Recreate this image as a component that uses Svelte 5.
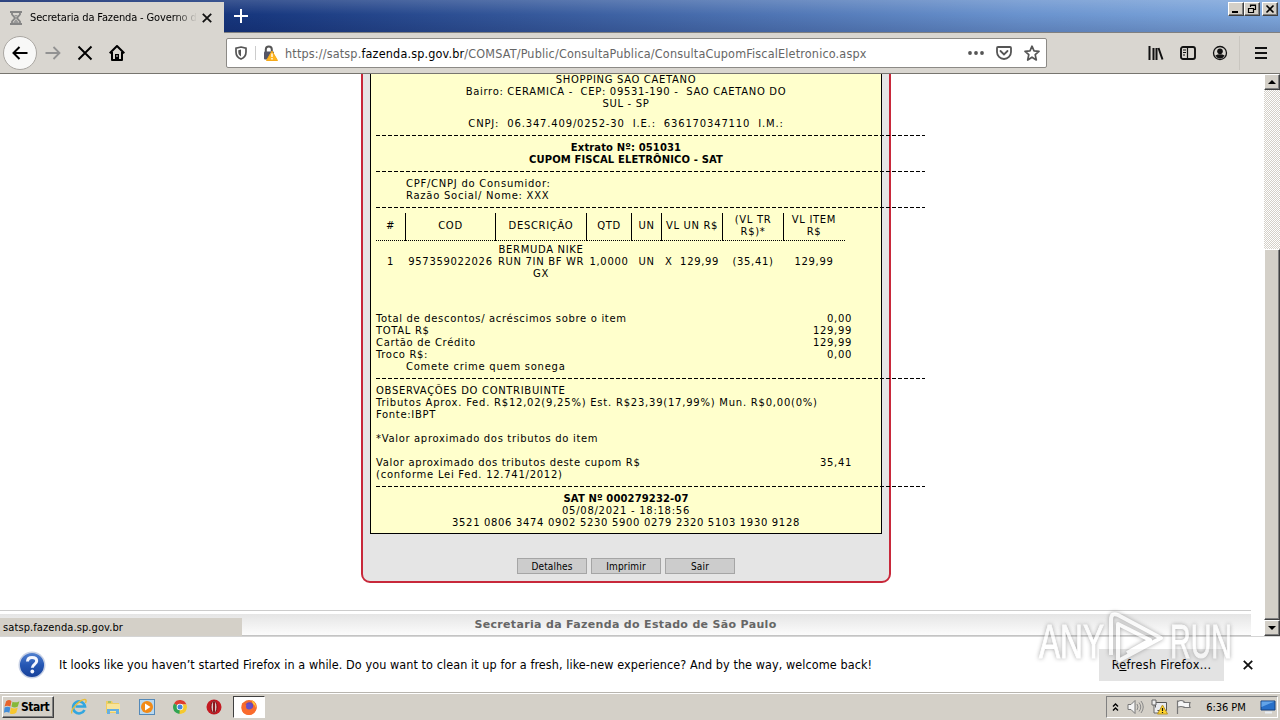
<script lang="ts">
	type Amount = {
		label: string;
		value: string;
	};

	const headers = ['#', 'COD', 'DESCRIÇÃO', 'QTD', 'UN', 'VL UN R$', '(VL TR\nR$)*', 'VL ITEM\nR$'];
	const item = [
		'1',
		'957359022026',
		'BERMUDA NIKE\nRUN 7IN BF WR\nGX',
		'1,0000',
		'UN',
		'X\u00a0 129,99',
		'(35,41)',
		'129,99'
	];

	const totals: Amount[] = [
		{ label: 'Total de descontos/ acréscimos sobre o item', value: '0,00' },
		{ label: 'TOTAL R$', value: '129,99' },
		{ label: 'Cartão de Crédito', value: '129,99' },
		{ label: 'Troco R$:', value: '0,00' }
	];

	const actions = ['Detalhes', 'Imprimir', 'Sair'];
</script>

<div class="screen">
	<header class="titlebar">
		<div class="tab">
			<svg class="hourglass" width="12" height="14" viewBox="0 0 12 14">
				<path d="M0 1h12M0 13h12M2 1v2.500L5 7 2 10.500V13M10 1v2.500L7 7l3 3.500V13" fill="none" stroke="#858585" stroke-width="1.800" />
				<path d="M3 12l3-4 3 4zM4 4h4L6 6z" fill="#999" />
			</svg>
			<span class="tab-title">Secretaria da Fazenda - Governo d</span>
			<svg width="10" height="10" viewBox="0 0 10 10"><path d="M.8.8l8.400 8.400M9.200.8L.8 9.200" stroke="#111" stroke-width="1.800" /></svg>
		</div>
		<svg class="new-tab" width="14" height="14" viewBox="0 0 14 14"><path d="M7 0v14M0 7h14" stroke="#fff" stroke-width="2" /></svg>
		<div class="window-buttons">
			<span class="win-btn"><svg width="12" height="10" viewBox="0 0 12 10"><path d="M2 8h6" stroke="#000" stroke-width="2" /></svg></span>
			<span class="win-btn"><svg width="12" height="10" viewBox="0 0 12 10"><path d="M4.500 3V1h5v4.500H8M4 1.500h6M2 4.500h5.500v4H2.500V4M2 4.500h6" fill="none" stroke="#000" stroke-width="1.200" /></svg></span>
			<span class="win-btn close"><svg width="12" height="10" viewBox="0 0 12 10"><path d="M2.500 1.500l7 7M9.500 1.500l-7 7" stroke="#000" stroke-width="1.600" /></svg></span>
		</div>
	</header>

	<nav class="toolbar">
		<div class="nav-buttons">
			<span class="back"><svg width="16" height="14" viewBox="0 0 16 14"><path d="M15.500 7H1.500M7.500 1l-6 6 6 6" fill="none" stroke="#000" stroke-width="2" /></svg></span>
			<svg width="16" height="14" viewBox="0 0 16 14"><path d="M.5 7h14M8.500 1l6 6-6 6" fill="none" stroke="#929292" stroke-width="1.800" /></svg>
			<svg width="16" height="16" viewBox="0 0 16 16"><path d="M1.500 1.500l13 13M14.500 1.500l-13 13" stroke="#000" stroke-width="1.900" /></svg>
			<svg width="16" height="16" viewBox="0 0 16 16">
				<path d="M.7 8.200L8 1l7.300 7.200M3 7v8h10V7" fill="none" stroke="#000" stroke-width="2" stroke-linejoin="round" />
				<path d="M6 15V9h4v6" fill="#000" /><path d="M8 10v2" stroke="#ddd" />
			</svg>
		</div>

		<div class="urlbar">
			<svg class="shield" width="12" height="14" viewBox="0 0 12 14">
				<path d="M6 1l5 1.200V6c0 3.500-2 5.800-5 7C3 11.800 1 9.500 1 6V2.200z" fill="none" stroke="#555" stroke-width="1.700" />
				<path d="M6 3.500v7C4 9.300 3.300 7.700 3.300 6V4.200z" fill="#555" />
			</svg>
			<svg class="lock" width="15" height="16" viewBox="0 0 15 16">
				<path d="M2.800 7V4.500a3 3 0 0 1 6 0V7" fill="none" stroke="#555" stroke-width="2" />
				<rect x="1" y="6.500" width="10" height="8" rx="1" fill="#555566" />
				<path d="M9 6l5.500 9.500H3.500z" fill="#ffb51f" stroke="#f4a91b" />
				<path d="M9 8.500v3.500M9 13v1.500" stroke="#fff" stroke-width="1.400" />
			</svg>
			<span class="url">https://satsp.<b>fazenda.sp.gov.br</b>/COMSAT/Public/ConsultaPublica/ConsultaCupomFiscalEletronico.aspx</span>
			<svg class="dots" width="16" height="4" viewBox="0 0 16 4"><circle cx="2" cy="2" r="1.900" /><circle cx="8" cy="2" r="1.900" /><circle cx="14" cy="2" r="1.900" /></svg>
			<svg class="pocket" width="16" height="14" viewBox="0 0 16 14">
				<path d="M2 1h12q1 0 1 1v4a7 7 0 0 1-14 0V2q0-1 1-1z" fill="none" stroke="#555" stroke-width="1.800" />
				<path d="M4.500 5L8 8.500 11.500 5" fill="none" stroke="#555" stroke-width="1.800" stroke-linecap="round" />
			</svg>
			<svg width="16" height="16" viewBox="0 0 16 16"><path d="M8 1.200l2 4.600 5 .5-3.800 3.400L12.300 15 8 12.200 3.700 15l1.100-5.300L1 6.300l5-.5z" fill="none" stroke="#555" stroke-width="1.700" stroke-linejoin="round" /></svg>
		</div>

		<div class="tools">
			<svg width="16" height="16" viewBox="0 0 16 16"><path d="M1.500 1v14M5.500 3v12M8.500 3v12M10.500 3l4 11.500" stroke="#111" stroke-width="2" /></svg>
			<svg width="16" height="14" viewBox="0 0 16 14"><rect x="1" y="1" width="14" height="12" rx="2" fill="none" stroke="#111" stroke-width="1.900" /><path d="M7.500 1v12M3 4h3M3 6.500h3M3 9h2" stroke="#111" stroke-width="1.200" /></svg>
			<svg width="16" height="16" viewBox="0 0 16 16"><circle cx="8" cy="8" r="6.500" fill="none" stroke="#111" stroke-width="1.300" /><circle cx="8" cy="6.200" r="2.800" fill="#111" /><path d="M3.300 10.500q4.700-2.500 9.400 0Q11 13.500 8 13.500t-4.700-3z" fill="#111" /></svg>
			<span class="divider"></span>
			<svg width="12" height="12" viewBox="0 0 12 12"><path d="M0 1h12M0 6h12M0 11h12" stroke="#111" stroke-width="2" /></svg>
		</div>
	</nav>

	<div class="viewport">
		<main class="page">
			<div class="panel">
				<div class="receipt">
					<div class="address">SHOPPING SAO CAETANO<br />Bairro: CERAMICA -&nbsp; CEP: 09531-190 -&nbsp; SAO CAETANO DO<br />SUL - SP</div>
					<div class="tax-ids">CNPJ:&nbsp; 06.347.409/0252-30&nbsp; I.E.:&nbsp; 636170347110&nbsp; I.M.:</div>
					<div class="rule"></div>
					<div class="heading">Extrato Nº: 051031<br />CUPOM FISCAL ELETRÔNICO - SAT</div>
					<div class="rule"></div>
					<div class="indent">CPF/CNPJ do Consumidor:<br />Razão Social/ Nome: XXX</div>
					<div class="rule"></div>

					<div class="items head">
						{#each headers as header}
							<div class="cell">{header}</div>
						{/each}
					</div>
					<div class="items">
						{#each item as value}
							<div class="cell">{value}</div>
						{/each}
					</div>

					<div class="totals">
						{#each totals as total}
							<div class="amount"><span>{total.label}</span><span>{total.value}</span></div>
						{/each}
						<div class="indent">Comete crime quem sonega</div>
					</div>
					<div class="rule"></div>
					<div>OBSERVAÇÕES DO CONTRIBUINTE</div>
					<div class="taxes">Tributos Aprox. Fed. R$12,02(9,25%) Est. R$23,39(17,99%) Mun. R$0,00(0%)</div>
					<div>Fonte:IBPT</div>
					<div class="note">*Valor aproximado dos tributos do item</div>
					<div class="amount"><span>Valor aproximado dos tributos deste cupom R$</span><span>35,41</span></div>
					<div class="law">(conforme Lei Fed. 12.741/2012)</div>
					<div class="rule"></div>
					<div class="sat"><b>SAT Nº 000279232-07</b><br /><span class="issued">05/08/2021 - 18:18:56</span><br />3521 0806 3474 0902 5230 5900 0279 2320 5103 1930 9128</div>
				</div>

				<div class="actions">
					{#each actions as action}
						<button>{action}</button>
					{/each}
				</div>
			</div>
			<footer>Secretaria da Fazenda do Estado de São Paulo</footer>
		</main>

		<div class="scrollbar">
			<span class="scroll-btn"><svg width="8" height="4" viewBox="0 0 8 4"><path d="M0 4l4-4 4 4z" /></svg></span>
			<span class="track"></span>
			<span class="thumb"></span>
			<span class="scroll-btn"><svg width="8" height="4" viewBox="0 0 8 4"><path d="M0 0l4 4 4-4z" /></svg></span>
		</div>
		<div class="status">satsp.fazenda.sp.gov.br</div>
	</div>

	<div class="notification">
		<svg class="help" width="28" height="28" viewBox="0 0 28 28">
			<defs><linearGradient id="help" x2="0" y2="1"><stop stop-color="#5584d2" /><stop offset=".5" stop-color="#2557b4" /><stop offset="1" stop-color="#174099" /></linearGradient></defs>
			<circle cx="14" cy="14" r="12.800" fill="url(#help)" stroke="#c8d1e5" stroke-width="1.500" />
			<path d="M9.500 10.500q.2-4 4.500-4 4.700 0 4.700 3.600c0 3.200-4.400 3.300-4.400 6.600" fill="none" stroke="#f5f7ff" stroke-width="3" />
			<circle cx="14.300" cy="20.500" r="1.900" fill="#f5f7ff" />
		</svg>
		<span class="message">It looks like you haven’t started Firefox in a while. Do you want to clean it up for a fresh, like-new experience? And by the way, welcome back!</span>
		<span class="refresh"><span>R<u>e</u>fresh Firefox...</span></span>
		<svg width="10" height="10" viewBox="0 0 10 10"><path d="M.8.8l8.400 8.400M9.200.8L.8 9.200" stroke="#111" stroke-width="1.800" /></svg>
	</div>

	<div class="taskbar">
		<div class="start">
			<svg width="17" height="16" viewBox="0 0 16 15">
				<path d="M2 2q3-2 5 0L6 7Q3 5.500.5 7z" fill="#e7642b" /><path d="M8 2.500q3 1.500 6.500-.5L13 7q-3 2-6 0z" fill="#86b83a" />
				<path d="M.5 8q3-1.500 5.500 0l-1 5q-2.500-1.500-5 0z" fill="#438dd8" /><path d="M6.500 8q3 2 6.500 0l-1.500 5q-3 2-6 .5z" fill="#f7c72f" />
			</svg>
			<span>Start</span>
		</div>
		<div class="apps">
			<svg width="18" height="18" viewBox="0 0 18 18">
				<path d="M14.500 12A6 6 0 1 1 15 8.500H5.500" fill="none" stroke="#32a6df" stroke-width="2.600" />
				<path d="M2 15.500C-1 13 10 1 15 1.500q2 .3.500 3.500" fill="none" stroke="#e8bd38" stroke-width="1.400" />
			</svg>
			<svg width="18" height="18" viewBox="0 0 18 18">
				<path d="M2 3h6l1 2h6v10H2z" fill="#efcd62" /><path d="M3 6h13v8H3z" fill="#f8e49a" /><path d="M3 16v-5h12v5h-3v-3H6v3z" fill="#67afe0" /><path d="M4 4h3" stroke="#5cb46a" />
			</svg>
			<svg width="18" height="18" viewBox="0 0 18 18"><rect x="1.500" y="1.500" width="15" height="15" fill="#b9d8ef" stroke="#5489b8" /><circle cx="9" cy="9" r="6" fill="#f28a16" /><path d="M7 5.500l5.500 3.500L7 12.500z" fill="#fff" /></svg>
			<svg width="18" height="18" viewBox="0 0 18 18">
				<circle cx="9" cy="9" r="7" fill="#e1e1dc" /><path d="M9 9L3 5.400A7 7 0 0 1 15.500 6.500H9z" fill="#df3d30" /><path d="M9 9L3 5.400A7 7 0 0 0 8.500 16l3-5z" fill="#31a352" /><path d="M9 6.500h6.500A7 7 0 0 1 8.500 16z" fill="#f5c92e" /><circle cx="9" cy="9" r="3.300" fill="#fff" /><circle cx="9" cy="9" r="2.500" fill="#4285dc" />
			</svg>
			<svg width="18" height="18" viewBox="0 0 18 18"><circle cx="9" cy="9" r="7.500" fill="#c41a22" /><ellipse cx="9" cy="9" rx="3" ry="6" fill="#e8deda" stroke="#701015" /><path d="M9 4v10" stroke="#8f151b" stroke-width="2.200" /></svg>
		</div>
		<div class="active-app">
			<svg width="18" height="18" viewBox="0 0 18 18">
				<circle cx="9" cy="9.500" r="7.500" fill="#f36a2d" /><circle cx="9.500" cy="8.500" r="4.300" fill="#6847b9" />
				<path d="M2 5q2 0 3 2 3-1 5 1-2 0-2.500 1.500Q9 12 12.500 10q2-3-1-8 6 2 5 9-2 6-8 6-7-1-7-7z" fill="#fa6b2d" /><path d="M11.500 2q5 3 4.500 8-1-3-3-4z" fill="#ffc83a" /><circle cx="9" cy="8.500" r="3" fill="#6550c8" />
			</svg>
		</div>
		<div class="tray">
			<svg width="8" height="10" viewBox="0 0 8 10"><path d="M1 4.500L3.500 2 6 4.500M1 8.500L3.500 6 6 8.500" fill="none" stroke="#000" stroke-width="1.400" /></svg>
			<svg width="17" height="16" viewBox="0 0 17 16"><path d="M1 5.500h3l4-4v13l-4-4H1z" fill="#f5f5f5" stroke="#777" /><path d="M10 5q2 3 0 6M12 3.500q3.500 4.500 0 9M14 2q4.500 6 0 12" fill="none" stroke="#888" /></svg>
			<svg width="17" height="16" viewBox="0 0 17 16"><path d="M4.500 3.500h11v8h-11z" fill="#e8eaee" stroke="#555" /><path d="M1 1h4v5H1zM3 6v8h5" fill="#eee" stroke="#666" /><path d="M11.500 6l5 9h-10z" fill="#ffd52c" stroke="#b99324" /><path d="M11.500 9v3M11.500 13v1" stroke="#111" stroke-width="1.200" /></svg>
			<svg width="17" height="16" viewBox="0 0 17 16"><path d="M2.500 15V1.500M3 2.500q3-2 6 0v1h6q-1 3 0 5H9V8q-3-1-6 0" fill="#f6f6f6" stroke="#777" stroke-width="1.200" /></svg>
			<span class="clock">6:36 PM</span>
			<svg width="16" height="14" viewBox="0 0 16 14"><path d="M1 1h14v9H1z" fill="#2870c9" stroke="#16407c" /><path d="M1.500 1.500h13L1.500 7z" fill="#63a4e8" /><path d="M5 12.500h7" stroke="#e8edf2" stroke-width="2" /></svg>
		</div>
	</div>

	<svg class="watermark" width="200" height="60" viewBox="0 0 200 60">
		<text x="3" y="50" textLength="65" lengthAdjust="spacingAndGlyphs">ANY</text>
		<path d="M75 47V12q0-8 7-5l43 23-43 23V16l32 16-23 13" />
		<text x="134" y="50" textLength="62" lengthAdjust="spacingAndGlyphs">RUN</text>
	</svg>
</div>

<style>
	:global(body) {
		margin: 0;
		overflow: hidden;
	}

	.screen {
		position: relative;
		display: flex;
		flex-direction: column;
		width: 1280px;
		height: 720px;
		overflow: hidden;
		background: #fff;
		color: #000;
		font-family: 'DejaVu Sans Condensed', 'DejaVu Sans', sans-serif;
		font-stretch: condensed;
	}

	svg {
		display: block;
		flex: none;
	}

	.titlebar {
		display: flex;
		align-items: flex-start;
		height: 32px;
		background:
			linear-gradient(rgba(255, 255, 255, 0.16), transparent 45%, rgba(0, 0, 40, 0.14)),
			linear-gradient(90deg, #0a246a, #18387f 20%, #6a93ce 80%, #7ea7dc);
		border-bottom: 1px solid #808080;
	}

	.tab {
		display: flex;
		align-items: center;
		width: 202px;
		height: 31px;
		margin-top: 2px;
		padding: 0 12px 0 10px;
		background: #d9d6d0;
	}

	.hourglass {
		margin-right: 8px;
	}

	.tab-title {
		width: 167px;
		margin-right: 5px;
		white-space: nowrap;
		font-size: 11px;
		letter-spacing: -0.13px;
		mask-image: linear-gradient(90deg, #000 145px, transparent 167px);
	}

	.new-tab {
		margin: 9px 0 0 10px;
	}

	.window-buttons {
		display: flex;
		margin: 2px 2px 0 auto;
	}

	.win-btn,
	.scroll-btn,
	.thumb {
		box-sizing: border-box;
		border: 1px solid;
		border-color: #fff #404040 #404040 #fff;
		background: #d4d0c8;
		box-shadow: inset -1px -1px #808080;
	}

	.win-btn {
		width: 16px;
		height: 14px;
		padding: 1px;
	}

	.win-btn.close {
		margin-left: 2px;
	}

	.toolbar {
		display: flex;
		align-items: center;
		box-sizing: border-box;
		height: 41px;
		border-bottom: 1px solid #77756f;
		background: #d9d6d0;
	}

	.nav-buttons {
		display: flex;
		align-items: center;
		gap: 16px;
		width: 223px;
		padding-left: 3px;
	}

	.back {
		display: flex;
		align-items: center;
		justify-content: center;
		width: 34px;
		height: 34px;
		margin-right: -8px;
		border: 1px solid #aaa7a2;
		border-radius: 50%;
		background: #f8f8f7;
		box-sizing: border-box;
	}

	.urlbar {
		display: flex;
		align-items: center;
		box-sizing: border-box;
		width: 821px;
		height: 30px;
		padding: 0 6px 0 8px;
		border: 1px solid #8c8a86;
		border-radius: 2px;
		background: #fff;
	}

	.shield {
		padding-right: 8px;
		border-right: 1px solid #ccc;
	}

	.lock {
		margin: 0 7px;
	}

	.url {
		width: 683px;
		color: #666;
		font-size: 12.5px;
		letter-spacing: 0.17px;
		white-space: nowrap;
	}

	.url b {
		color: #000;
		font-weight: 400;
	}

	.dots {
		fill: #555;
	}

	.pocket {
		margin: 0 12px;
	}

	.tools {
		display: flex;
		align-items: center;
		gap: 16px;
		margin-left: auto;
		padding-right: 13px;
	}

	.divider {
		width: 1px;
		height: 34px;
		margin: 0 -1px 0 -5px;
		background: #c9c6c0;
	}

	.viewport {
		position: relative;
		display: flex;
		height: 562px;
		overflow: hidden;
		font-family: 'DejaVu Sans', sans-serif;
		font-stretch: normal;
	}

	.page {
		display: flex;
		flex-direction: column;
		align-items: center;
		width: 1251px;
		margin-right: 13px;
	}

	.panel {
		box-sizing: border-box;
		width: 530px;
		height: 519px;
		margin: -10px 0 27px 1px;
		padding: 0 7px;
		border: 2px solid #c8283a;
		border-radius: 9px;
		background: #e5e5e5;
	}

	.receipt {
		box-sizing: border-box;
		width: 512px;
		height: 468px;
		padding: 7px 5px 0;
		border: 1px solid #000;
		background: #ffffcc;
		font-size: 10px;
		letter-spacing: 0.67px;
		line-height: 12px;
		white-space: nowrap;
	}

	.address,
	.tax-ids,
	.heading,
	.sat {
		text-align: center;
	}

	.tax-ids {
		margin-top: 8px;
		letter-spacing: 0.83px;
	}

	.heading,
	.sat b {
		font-weight: 700;
		letter-spacing: 0.12px;
	}

	/* the rules run past the receipt's right edge */
	.rule {
		width: 549px;
		height: 12px;
		background: repeating-linear-gradient(90deg, #000 0 4px, transparent 4px 6px) 0 5px / 100% 1px no-repeat;
	}

	.indent {
		padding-left: 30px;
		letter-spacing: 0.74px;
	}

	.items {
		display: grid;
		grid-template-columns: 30px 90px 91px 45px 30px 61px 61px 61px;
		height: 36px;
		margin-top: 3px;
	}

	.items.head {
		height: 28px;
		margin-top: -1px;
	}

	.cell {
		display: flex;
		align-items: center;
		justify-content: center;
		box-sizing: border-box;
		padding-right: 1px;
		text-align: center;
		white-space: pre;
	}

	.head .cell {
		padding-bottom: 3px;
		background:
			linear-gradient(#000, #000) 100% 0 / 1px 100% no-repeat,
			repeating-linear-gradient(90deg, #000 0 1px, transparent 1px 2px) 0 27px / 100% 1px no-repeat;
	}

	.head .cell:last-child {
		background: repeating-linear-gradient(90deg, #000 0 1px, transparent 1px 2px) 0 27px / 100% 1px no-repeat;
	}

	.totals {
		margin-top: 33px;
	}

	.amount {
		display: flex;
		justify-content: space-between;
		width: 476px;
	}

	.taxes {
		letter-spacing: 0.77px;
	}

	.note {
		margin: 12px 0;
	}

	.law,
	.issued {
		letter-spacing: 0.74px;
	}

	.actions {
		display: flex;
		justify-content: center;
		gap: 4px;
		margin-top: 24px;
	}

	button {
		width: 70px;
		height: 16px;
		padding: 0;
		border: 1px solid #a5a5a5;
		background: #ccc;
		color: #000;
		font-family: 'DejaVu Sans Condensed', 'DejaVu Sans', sans-serif;
		font-size: 10px;
		letter-spacing: 0.15px;
		line-height: 15px;
	}

	footer {
		box-sizing: border-box;
		width: 100%;
		height: 26px;
		border-top: 1px solid #ccc;
		border-bottom: 1px solid #c4c4c4;
		background: linear-gradient(#e5e5e5, #fff) 0 3px no-repeat;
		color: #666;
		font-size: 11px;
		font-weight: 700;
		letter-spacing: 0.33px;
		line-height: 27px;
		text-align: center;
	}

	.scrollbar {
		display: flex;
		flex-direction: column;
		width: 16px;
	}

	.scroll-btn {
		display: flex;
		align-items: center;
		justify-content: center;
		height: 16px;
	}

	.track {
		height: 159px;
		background: repeating-conic-gradient(#d4d0c8 0 25%, #fff 0 50%) 0 0 / 2px 2px;
	}

	.thumb {
		flex: 1;
	}

	.status {
		position: absolute;
		bottom: 0;
		left: 0;
		box-sizing: border-box;
		width: 242px;
		height: 18px;
		padding-left: 3px;
		background: #d4d0c8;
		font-family: 'DejaVu Sans Condensed', 'DejaVu Sans', sans-serif;
		font-size: 11px;
		line-height: 20px;
		letter-spacing: 0.1px;
	}

	.notification {
		display: flex;
		align-items: center;
		box-sizing: border-box;
		height: 57px;
		padding: 0 27px 0 18px;
		border-top: 1px solid #d5d5d5;
		border-bottom: 1px solid #b8b5af;
		font-size: 12.5px;
	}

	.message {
		width: 1040px;
		margin-left: 13px;
		letter-spacing: 0.08px;
		white-space: nowrap;
	}

	.refresh {
		display: flex;
		align-items: center;
		justify-content: center;
		width: 125px;
		height: 32px;
		margin-right: 19px;
		background: #e3e3e3;
		letter-spacing: 0.33px;
		white-space: nowrap;
	}

	.taskbar {
		display: flex;
		align-items: center;
		box-sizing: border-box;
		height: 27px;
		padding: 0 2px;
		border-top: 1px solid #fff;
		background: #d4d0c8;
	}

	.start {
		display: flex;
		align-items: center;
		box-sizing: border-box;
		width: 52px;
		height: 22px;
		padding-left: 1px;
		border: 1px solid;
		border-color: #fff #404040 #404040 #fff;
		box-shadow: inset -1px -1px #808080;
		font-size: 12px;
		font-weight: 700;
		letter-spacing: -0.5px;
	}

	.apps {
		display: flex;
		gap: 15.8px;
		margin-left: 16px;
	}

	.active-app {
		display: flex;
		align-items: center;
		justify-content: center;
		box-sizing: border-box;
		width: 32px;
		height: 22px;
		margin-left: 9.800px;
		border: 1px solid;
		border-color: #404040 #fff #fff #404040;
		background: #fff;
	}

	.tray {
		display: flex;
		align-items: center;
		box-sizing: border-box;
		width: 172px;
		height: 22px;
		margin-left: auto;
		padding: 0 1px 0 5px;
		gap: 7px;
		border: 1px solid;
		border-color: #808080 #fff #fff #808080;
	}

	.clock {
		margin: 0 auto;
		font-size: 11px;
		letter-spacing: -0.05px;
	}

	.watermark {
		position: absolute;
		top: 608px;
		left: 1036px;
		overflow: visible;
		opacity: 0.65;
		filter: drop-shadow(0 0 2px #777);
	}

	.watermark text {
		fill: #fff;
		stroke: #fff;
		stroke-width: 1px;
		font: 400 49px 'Liberation Sans', sans-serif;
	}

	.watermark path {
		fill: none;
		stroke: #fff;
		stroke-width: 4px;
		stroke-linejoin: round;
	}
</style>
